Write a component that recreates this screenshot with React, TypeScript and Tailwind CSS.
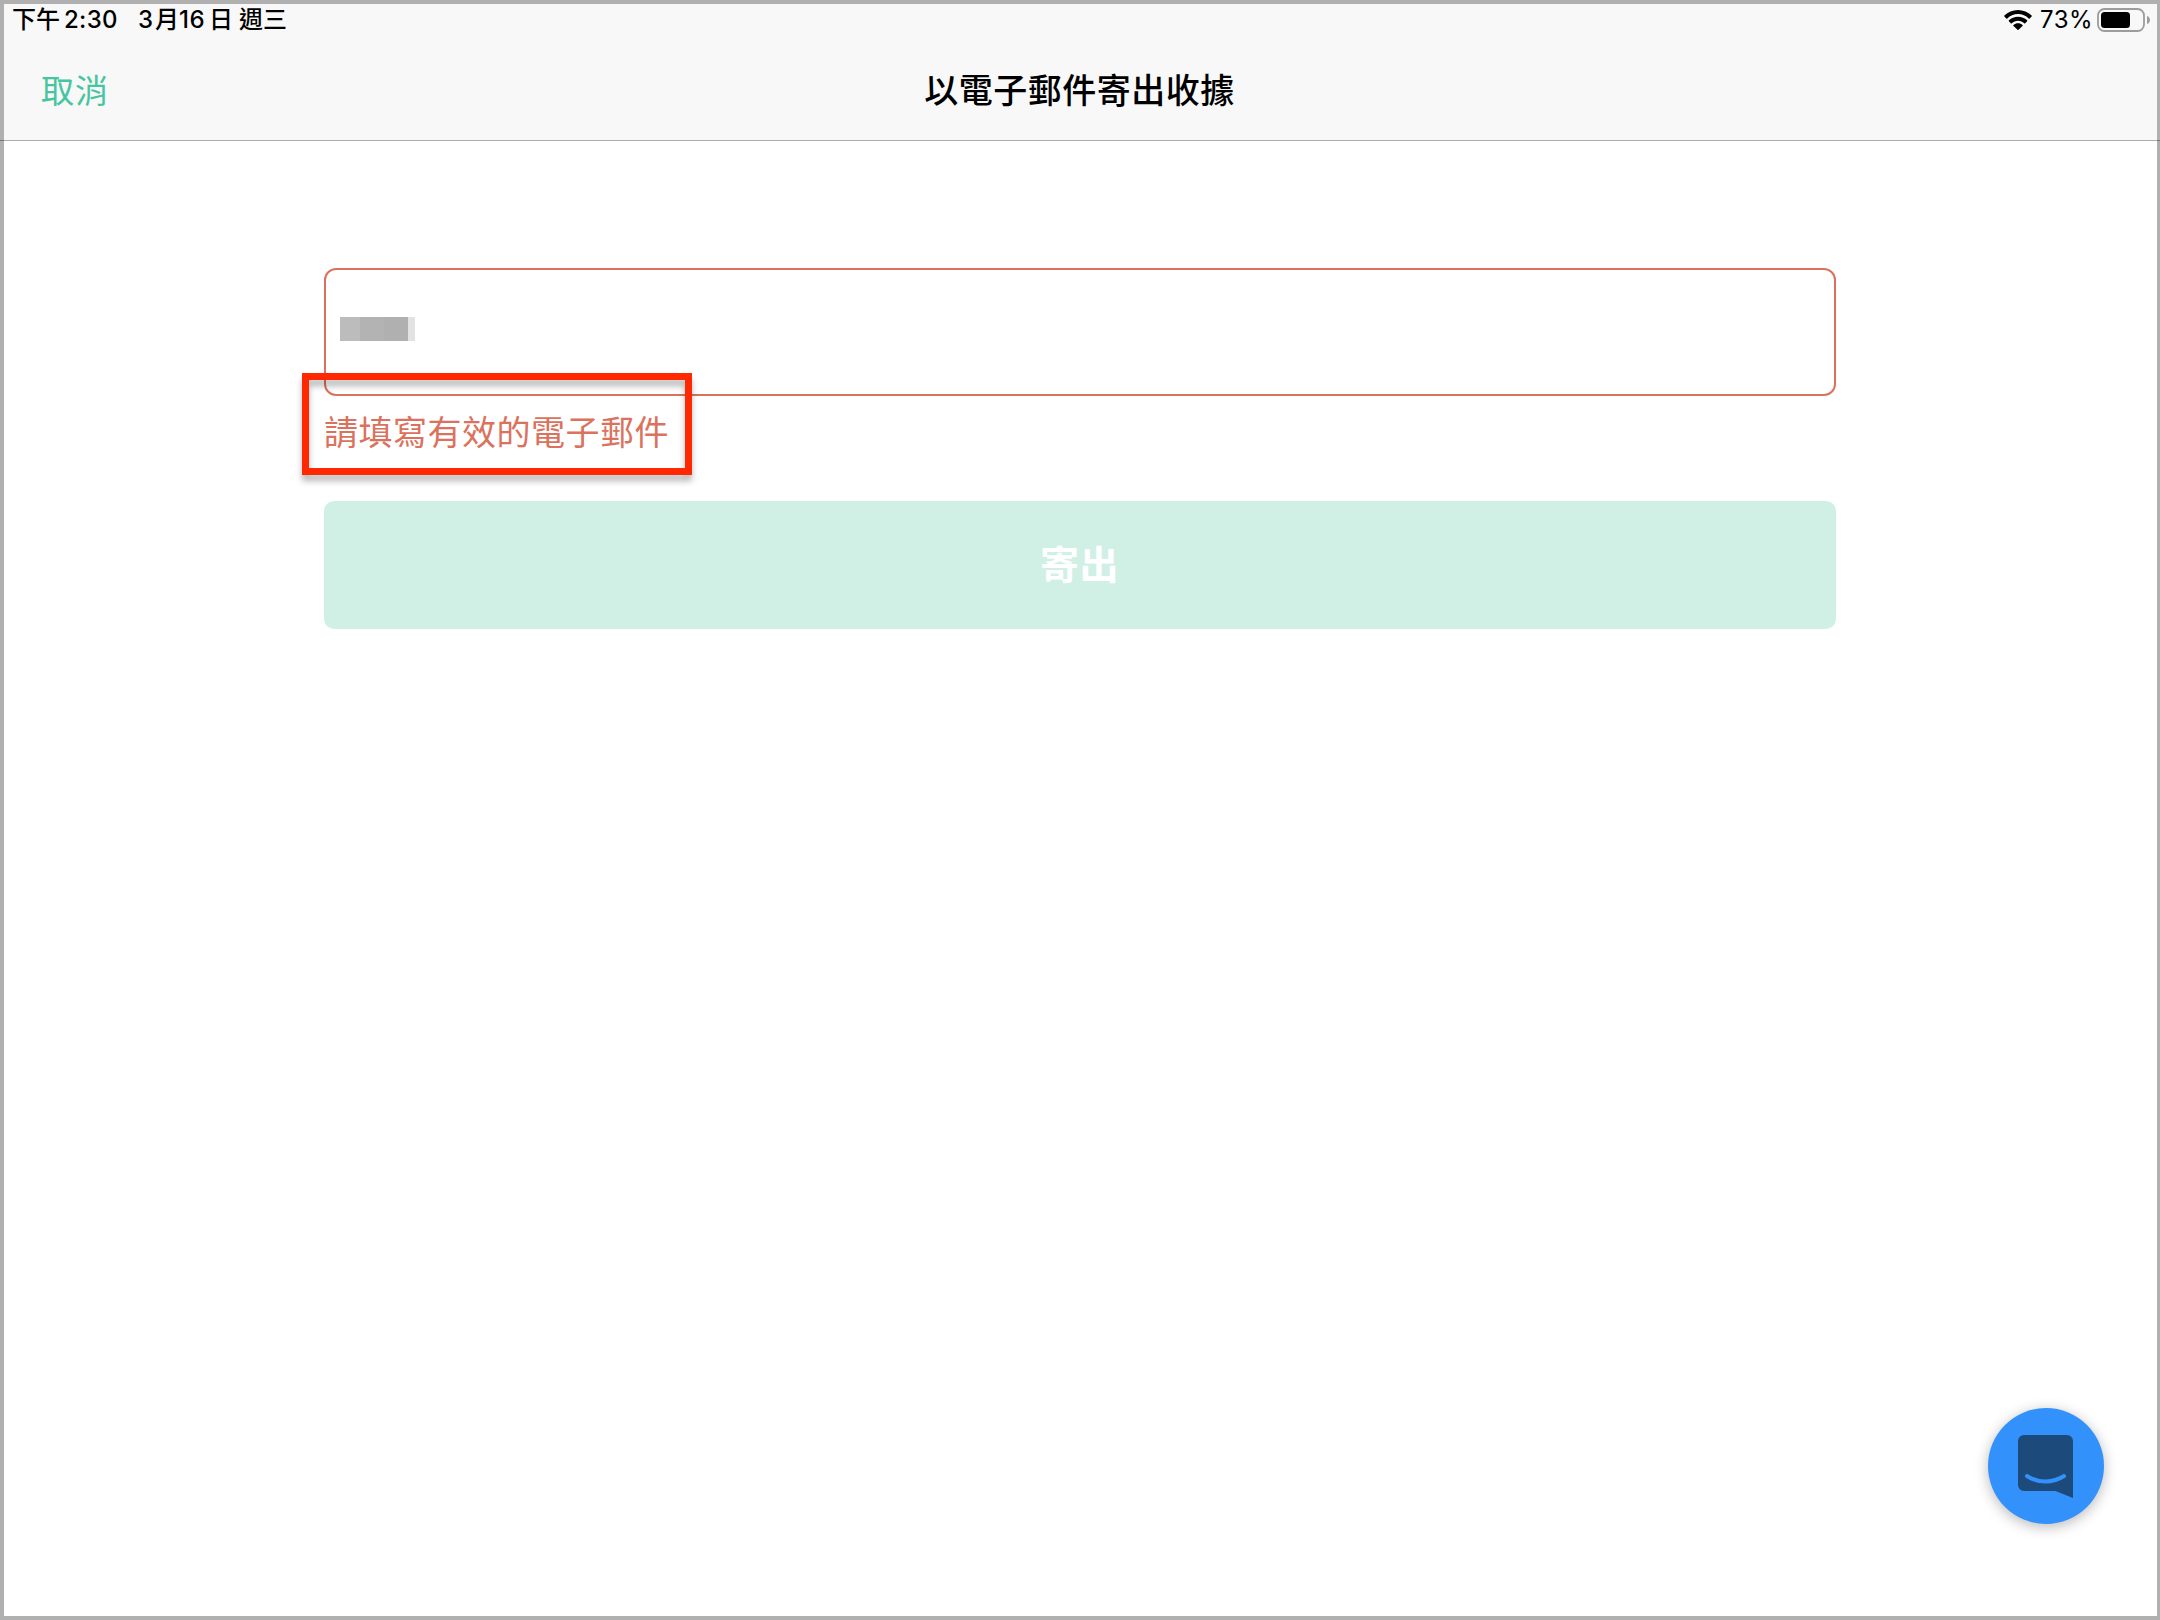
const cjk = "font-['Noto_Sans_CJK_TC',sans-serif]";
const latin = "font-['Inter','Noto_Sans_CJK_TC',sans-serif]";

function WifiIcon() {
  return (
    <svg width="28" height="20" viewBox="0 0 28 20" fill="#000">
      <path d="M14 0C19.3 0 24.1 2.100 27.600 5.500a.7.7 0 0 1 0 1L25.700 8.400a.7.7 0 0 1-1 0C21.900 5.700 18.200 4.100 14 4.100S6.100 5.700 3.300 8.400a.7.7 0 0 1-1 0L.4 6.500a.7.7 0 0 1 0-1C3.900 2.100 8.700 0 14 0Z" />
      <path d="M14 6.700c3.500 0 6.700 1.400 9.100 3.600a.7.7 0 0 1 0 1l-1.900 1.900a.7.7 0 0 1-1 0c-1.600-1.500-3.800-2.500-6.200-2.500s-4.600 1-6.200 2.500a.7.7 0 0 1-1 0l-1.900-1.900a.7.7 0 0 1 0-1C7.300 8.100 10.500 6.700 14 6.700Z" />
      <path d="M14 13.200c1.700 0 3.300.6 4.500 1.700a.7.7 0 0 1 0 1l-4 3.900a.7.7 0 0 1-1 0l-4-3.900a.7.7 0 0 1 0-1c1.200-1.100 2.800-1.700 4.500-1.700Z" />
    </svg>
  );
}

function BatteryIcon() {
  return (
    <svg width="54" height="24" viewBox="0 0 54 24">
      <rect x="1" y="1" width="46" height="22" rx="6.500" fill="none" stroke="#9c9c9c" strokeWidth="1.800" />
      <rect x="4" y="4" width="29" height="16" rx="3.500" fill="#000" />
      <path d="M50 8c1.800.6 3 2.100 3 4s-1.200 3.400-3 4Z" fill="#9c9c9c" />
    </svg>
  );
}

function StatusBar() {
  return (
    <div className="flex h-[32px] items-center justify-between pl-[8px] pr-[6px] text-black">
      <div className={`${latin} flex items-center whitespace-nowrap text-[24px] leading-[32px] font-medium`}>
        <span className="w-[52px]">下午</span>
        <span className="w-[74px] tracking-[0.3px]">2:30</span>
        <span className="w-[17px]">3</span>
        <span className="w-[24px]">月</span>
        <span className="w-[30px] tracking-[0.5px]">16</span>
        <span className="w-[30px]">日</span>
        <span>週三</span>
      </div>
      <div className="flex items-center">
        <WifiIcon />
        <span className={`${latin} ml-[8px] w-[57px] whitespace-nowrap text-[24px] leading-[32px] tracking-[0.5px]`}>73%</span>
        <BatteryIcon />
      </div>
    </div>
  );
}

function Header() {
  return (
    <header className="bg-[#f8f8f8]">
      <StatusBar />
      <div className="grid h-[104px] grid-cols-[1fr_auto_1fr] items-center pt-px pr-[2px]">
        <button className={`${cjk} justify-self-start pl-[37px] text-[33px] leading-[48px] font-normal tracking-[1px] text-[#47c5a0]`}>取消</button>
        <h1 className={`${cjk} text-[34px] leading-[48px] font-medium tracking-[0.5px] text-black`}>以電子郵件寄出收據</h1>
        <span />
      </div>
    </header>
  );
}

function MaskedValue() {
  return (
    <div className="flex h-[24px]">
      <span className="w-[20px] bg-[#bcbcbc]" />
      <span className="w-[24px] bg-[#b3b3b3]" />
      <span className="w-[24px] bg-[#b0b0b0]" />
      <span className="w-[7px] bg-[#e2e2e2]" />
    </div>
  );
}

function ChatButton() {
  return (
    <button className="absolute top-[1408px] left-[1988px] size-[116px] rounded-full bg-[#3391fb] shadow-[0_3px_14px_rgba(0,0,0,0.28)]">
      <svg width="116" height="116" viewBox="0 0 116 116">
        <path d="M36 27H79a6 6 0 0 1 6 6V90L67.500 83H36a6 6 0 0 1-6-6V33a6 6 0 0 1 6-6Z" fill="#1c4a7b" />
        <path d="M39 68C50 75.300 65 75.300 76 68" fill="none" stroke="#3391fb" strokeWidth="4" strokeLinecap="round" />
      </svg>
    </button>
  );
}

export default function App() {
  return (
    <div className="relative flex h-[1620px] w-[2160px] flex-col border-4 border-r-[3px] border-[#b0b0b0] bg-white">
      <Header />
      <div className="-mr-[3px] -ml-1 h-px shrink-0 bg-black/33" />
      <main className="ml-[320px] flex w-[1512px] flex-col pt-[127px]">
        <div className="relative">
          <div className="h-[128px] rounded-[12px] border-2 border-[#da725d] pt-[47px] pl-[14px]">
            <MaskedValue />
          </div>
          <p className={`${cjk} mt-[10px] h-[51px] text-[34px] leading-[50px] font-normal tracking-[0.5px] whitespace-nowrap text-[#da725d]`}>
            請填寫有效的電子郵件
          </p>
          <div className="absolute top-[105px] left-[-22px] h-[102px] w-[390px] border-[7px] border-[#ff2800] [filter:drop-shadow(0_6px_3px_rgba(0,0,0,0.28))]" />
        </div>
        <button className={`${cjk} mt-[44px] h-[128px] rounded-[10px] bg-[#d0f0e5] pr-[1px] pb-[5px] text-[39px] leading-[123px] font-bold tracking-[0.5px] text-white`}>
          寄出
        </button>
      </main>
      <div className="absolute -top-1 -left-1">
        <ChatButton />
      </div>
    </div>
  );
}
